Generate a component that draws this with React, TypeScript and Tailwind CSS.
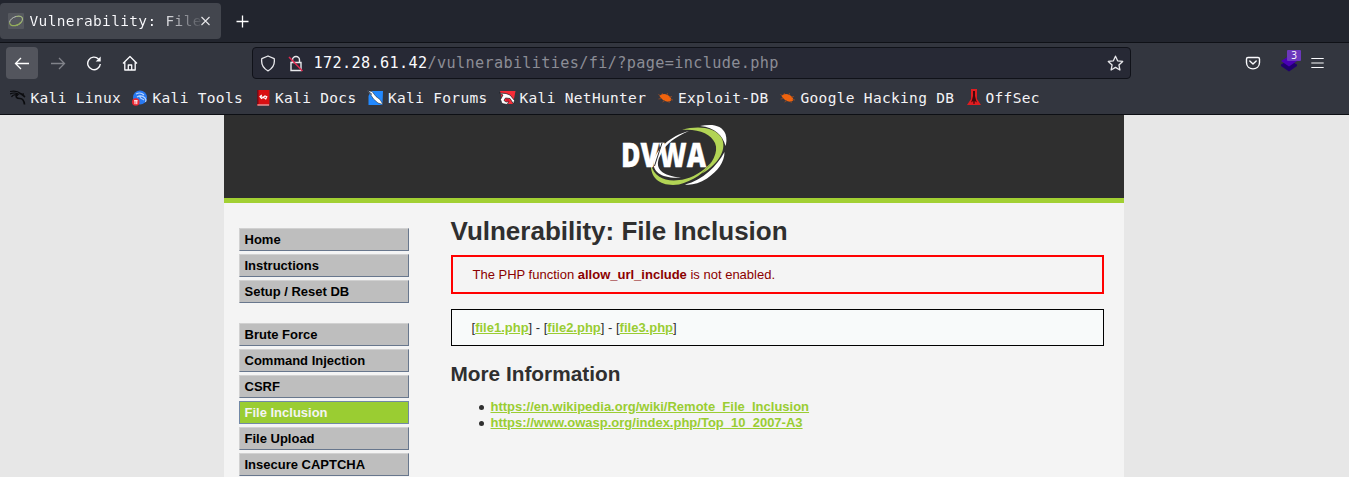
import React from "react";

const mono = "font-['DejaVu_Sans_Mono',monospace]";

function Swoosh() {
  return (
    <svg width="108" height="64" viewBox="20 13 108 64" role="img" aria-label="DVWA">
      <path fill="#fff" d="M100 16C112 13.500 122 15 125.500 24C127 29 126.500 33 125.500 36C123 26 115 17 100 16Z" />
      <path fill="#fff" d="M124.500 42C124.500 52 118 61 107 68.500C99 73.500 91 75.500 85 74.500C103 70 117 56 124.500 42Z" />
      <path fill="#b2d455" d="M82 20C97 15.500 114 17 121 27C128 38 119 54 102 63.500C112 54 119 42 115 33C111 24 98 18.500 82 20Z" />
      <path fill="#b2d455" d="M51 54C54 69 69 73 85 69C97 66 107 58 112 51C106 63 92 71 79 74.500C62 77 50 69 51 54Z" />
      <path fill="#fff" d="M89 21C75 27 66 34 62 42L59 48C55 59 62 66 81 67.500C64 69 51 63 54 50C57 39 70 26 89 21Z" />
      <text
        x="21" y="56.500" textLength="85" lengthAdjust="spacingAndGlyphs"
        fill="#fff" stroke="#fff" strokeWidth=".3"
        className="font-['Open_Sans',sans-serif] text-[33.500px] font-extrabold"
      >DVWA</text>
      <path d="M62 33L54.500 56" stroke="#2f2f2f" strokeWidth="1" />
    </svg>
  );
}

function Favicon() {
  return (
    <svg width="16" height="16" viewBox="0 0 16 16" fill="none">
      <rect width="16" height="16" rx="1" fill="#55585e" />
      <path d="M8 3.500C12 2.500 15 3.500 14.500 6.500C14 9.500 11 11.500 8.500 12.500" stroke="#a4b980" strokeWidth="1.200" />
      <path d="M1.500 9.500C2 6.500 4.500 4.500 8 3.500" stroke="#bfc4bd" strokeWidth="1" />
      <path d="M1.500 9.500C2 12.500 4.500 13 7.500 12.500C10 12 12 10.500 13 9" stroke="#94ae5a" strokeWidth="1.300" />
    </svg>
  );
}

function Dragon() {
  return (
    <svg width="17" height="16" viewBox="0 0 17 16" fill="none" stroke="#0b0c0f">
      <path d="M0 1.500C4 .8 8 1 10.500 3.500M0 4C3 2.500 7 3 9 4.500M1.500 7C3 4.500 6 4.500 8 5.500" strokeWidth="1.200" />
      <path d="M7 3.500C5 7.500 7 8.500 10 8.500C13 8.500 14 10.500 14.500 14.500M9.500 3.500C12 3.500 13 5.500 15 7M11 4.500L14 4" strokeWidth="1.700" />
    </svg>
  );
}

function Tools() {
  return (
    <svg width="17" height="16" viewBox="0 0 17 16" fill="none">
      <circle cx="8" cy="7.500" r="7" fill="#2878f0" />
      <path d="M4 4C7 2.500 10 3 12 5M5 7C8 5 11 6 13 8C14.500 9.500 13.500 12 13.500 12M8 5.500C7 9 10 8 12 10" stroke="#b9d6ff" strokeWidth="1.100" />
      <circle cx="3.800" cy="12" r="3.800" fill="#eb2630" />
      <path d="M2.100 10.700H5.600M3 10.700V14.200M4.800 10.700V14.200" stroke="#fff" />
    </svg>
  );
}

function Docs() {
  return (
    <svg width="13" height="16" viewBox="0 0 13 16" fill="none">
      <path d="M0 0H12.500V15.500H0Z" fill="#d90f12" />
      <path d="M0 0H1.500V14H0Z" fill="#710d18" />
      <path d="M.5 15H12" stroke="#efd6d6" />
      <path d="M4.800 5L3 6.500L4.500 8.500L8 6L9.800 6.800L8.500 9.500M3.500 6.500L8.500 8.500" stroke="#fff" strokeWidth="1.200" />
    </svg>
  );
}

function Forums() {
  return (
    <svg width="17" height="16" viewBox="0 0 17 16" fill="none">
      <path d="M4 1H16L15.500 15H1.500L1.500 6Z" fill="#2289ff" />
      <path d="M0 .5L5 1.500L9 6.500L13 9.500L16 14.500L11 13L6.500 9L3.500 4.500Z" fill="#fff" stroke="#15171d" strokeWidth=".5" />
      <path d="M1 1L5 4.500" stroke="#24354e" />
    </svg>
  );
}

function NetHunter() {
  return (
    <svg width="17" height="16" viewBox="0 0 17 16" fill="none">
      <path d="M1 1H16.500L14 14H4Z" fill="#f72c38" />
      <path d="M0 3L7 3.500L11 5L15.500 10.500L14.500 14L11 8.500L6.500 8L5 10.500L7 12L10 11.500L8 14.500L3 13.500L1.500 9.500L4 5Z" fill="#fff" stroke="#17191f" strokeWidth=".7" />
      <path d="M6.500 9L9.500 9L11 11.500L8 11.500Z" fill="#d21730" />
    </svg>
  );
}

function Bug() {
  return (
    <svg width="16" height="16" viewBox="0 0 16 16" fill="none">
      <path d="M1.500 6C3.500 3.500 7 3.500 9.500 5C12 6.500 14.500 9 12.500 11C9.500 13 4 10.500 1.500 6Z" fill="#f0630d" />
      <path d="M2 6L.5 4M5 4.500L4 3M9 5L9.500 3M11.500 7L14 6.500M12.500 9.500L15 10M10 11L11.500 13M7 10.500L4.500 12M3.500 8.500L.5 9" stroke="#8f4927" strokeWidth=".9" />
    </svg>
  );
}

function OffSec() {
  return (
    <svg width="14" height="17" viewBox="0 0 14 17" fill="none">
      <path d="M4 0H10V10L14 16H0L4 10Z" fill="#e11c20" />
      <path d="M6 2H8V7L9 11L10 13.500L7.800 12L7.500 15H6.500L6.200 12L4 13.500L5 11L6 7Z" fill="#40090c" />
    </svg>
  );
}

const bookmarks = [
  { label: "Kali Linux", icon: <Dragon />, box: "w-[131.500px] pl-[9.500px] gap-[4px]" },
  { label: "Kali Tools", icon: <Tools />, box: "w-[125px] gap-[4px]" },
  { label: "Kali Docs", icon: <Docs />, box: "w-[110.500px] gap-[5.500px]" },
  { label: "Kali Forums", icon: <Forums />, box: "w-[132px] gap-[4px]" },
  { label: "Kali NetHunter", icon: <NetHunter />, box: "w-[159px] gap-[3.500px]" },
  { label: "Exploit-DB", icon: <Bug />, box: "w-[122px] gap-[4px]" },
  { label: "Google Hacking DB", icon: <Bug />, box: "w-[187px] gap-[4.500px]" },
  { label: "OffSec", icon: <OffSec />, box: "gap-[4.500px]" },
];

const groups = [
  ["Home", "Instructions", "Setup / Reset DB"],
  ["Brute Force", "Command Injection", "CSRF", "File Inclusion", "File Upload", "Insecure CAPTCHA"],
];

const resources = [
  "https://en.wikipedia.org/wiki/Remote_File_Inclusion",
  "https://www.owasp.org/index.php/Top_10_2007-A3",
];

const linkClass = "font-bold text-[#9acd32] underline";

function Browser() {
  return (
    <div className={`${mono} text-[#fbfbfe]`}>
      <div className="flex h-[43px] items-start border-b border-[#0f1117] bg-[#22252e] pt-[3px]">
        <div className="flex h-9 w-[221px] items-center rounded-[4px] bg-[#43464e] pl-2">
          <Favicon />
          <span className="ml-[5.500px] w-[171px] overflow-hidden whitespace-pre bg-[linear-gradient(90deg,#fbfbfe_76%,#50535b_100%)] bg-clip-text text-[14.500px] leading-5 tracking-[0.340px] text-transparent">Vulnerability: File</span>
          <svg width="9" height="10" viewBox="0 0 9 10" stroke="#e8e8eb" strokeWidth="1.100"><path d="M.5 1L8.500 9M8.500 1L.5 9" /></svg>
        </div>
        <svg className="mt-[12px] ml-[15px]" width="13" height="13" viewBox="0 0 13 13" stroke="#fff" strokeWidth="1.300"><path d="M6.500 .5V12.500M.5 6.500H12.500" /></svg>
      </div>
      <div className="flex h-10 items-center bg-[#33363f] pl-[6px]">
        <div className="flex size-8 items-center justify-center rounded-[4px] bg-[#53555d]">
          <svg width="16" height="16" viewBox="0 0 16 16" fill="none" stroke="#fff" strokeWidth="1.300"><path d="M15 8.500H1.500M7 3L1.500 8.500L7 14" /></svg>
        </div>
        <svg className="ml-[12px]" width="16" height="16" viewBox="0 0 16 16" fill="none" stroke="#81838a" strokeWidth="1.300"><path d="M1 8.500H14.500M9 3L14.500 8.500L9 14" /></svg>
        <svg className="ml-5" width="16" height="16" viewBox="0 0 16 16" fill="none" stroke="#fbfbfe" strokeWidth="1.400"><path d="M12.500 4A6.300 6.300 0 1 0 14.300 9" /><path d="M14.700 1.500V6.500H9.700Z" fill="#fbfbfe" stroke="none" /></svg>
        <svg className="ml-[19.500px]" width="16" height="16" viewBox="0 0 16 16" fill="none" stroke="#fbfbfe" strokeWidth="1.300" strokeLinejoin="round"><path d="M1 8.500L8 1.500L15 8.500M2.800 7V15H13.200V7M6.300 15V10H9.700V15" /></svg>
        <div className="ml-[114.500px] flex h-8 w-[879px] items-center rounded-[4px] border border-[#101219] bg-[#272935] pl-[7px]">
          <svg width="16" height="17" viewBox="0 0 16 17" fill="none" stroke="#e9e9ed" strokeWidth="1.300" strokeLinejoin="round"><path d="M8 1L14.200 3.700C15 9 12.500 13.500 8 15.800C3.500 13.500 1 9 1.800 3.700Z" /></svg>
          <svg className="ml-[12px]" width="16" height="17" viewBox="0 0 16 17" fill="none"><path d="M4.500 7.500V5A3.500 3.500 0 0 1 11.500 5V7.500M3 7.500H13V15.500H3Z" stroke="#e9e9ed" strokeWidth="1.400" /><path d="M1 2L14.500 16" stroke="#e22850" strokeWidth="1.500" /></svg>
          <span className="ml-[9.500px] grow whitespace-pre text-[15.200px] leading-5 tracking-[0.350px] text-[#8c8d96]"><span className="text-[#fbfbfe]">172.28.61.42</span>/vulnerabilities/fi/?page=include.php</span>
          <svg className="mr-[6.500px]" width="17" height="17" viewBox="0 0 17 17" fill="none" stroke="#e9e9ed" strokeWidth="1.300" strokeLinejoin="round"><path d="M8.500 1.200L10.600 5.800L15.700 6.400L11.900 9.900L12.900 15L8.500 12.400L4.100 15L5.100 9.900L1.300 6.400L6.400 5.800Z" /></svg>
        </div>
        <svg className="ml-[114px]" width="16" height="16" viewBox="0 0 16 16" fill="none" stroke="#fbfbfe" strokeWidth="1.400" strokeLinecap="round" strokeLinejoin="round"><path d="M3 2.500H13C14 2.500 14.500 3 14.500 4V7.500C14.500 16 1.500 16 1.500 7.500V4C1.500 3 2 2.500 3 2.500ZM4.800 6L8 9L11.200 6" /></svg>
        <div className="relative ml-5 h-8 w-5">
          <svg className="mt-[8px]" width="17" height="18" viewBox="0 0 17 18"><path d="M0 9.500L8 5L16 9.500V11L8 16.500L0 11Z" fill="#20006d" /><path d="M0 6L8 1L16 6L8 11.500Z" fill="#4a00b5" /></svg>
          <span className="absolute top-[3px] left-[6px] flex h-[11px] w-[14px] items-center justify-center rounded-[1px] bg-[#6c38bc] pb-[2px] font-['Open_Sans',sans-serif] text-[10px] leading-none text-white">3</span>
        </div>
        <svg className="ml-[10px]" width="13" height="12" viewBox="0 0 13 12" stroke="#fbfbfe" strokeWidth="1.200"><path d="M.3 1.500H12.700M.3 6H12.700M.3 10.500H12.700" /></svg>
      </div>
      <div className="flex h-8 items-center border-b border-[#0d0f14] bg-[#33363f] pb-[2px]">
        {bookmarks.map((b) => (
          <div key={b.label} className={`flex shrink-0 items-center whitespace-nowrap text-[14.500px] leading-5 tracking-[0.320px] text-[#f3f3f6] ${b.box}`}>
            {b.icon}
            <span>{b.label}</span>
          </div>
        ))}
      </div>
    </div>
  );
}

export default function App() {
  return (
    <div className="flex h-[477px] w-[1349px] flex-col overflow-hidden bg-[#e7e7e7]">
      <Browser />
      <div className="ml-[224px] flex w-[900px] grow flex-col bg-[#f4f4f4] font-['Liberation_Sans',sans-serif] text-[13px] leading-4 text-[#2f2f2f]">
        <header className="flex h-[88px] shrink-0 justify-center border-b-[5px] border-[#a2d033] bg-[#2f2f2f] pt-[8px]">
          <Swoosh />
        </header>
        <div className="flex">
          <nav className="ml-[15px] w-[170px] shrink-0 pt-[25px]">
            {groups.map((g, i) => (
              <ul key={i} className="mb-5 flex flex-col gap-[3px]">
                {g.map((t) => (
                  <li key={t} className={t === "File Inclusion"
                    ? "h-[23px] border border-[#7288a5] bg-[#9acd32] pl-[4.500px] leading-[21px] font-bold text-[#f4f4f4]"
                    : "h-[23px] border border-t-[#d1d1d1] border-r-[#68778d] border-b-[#68778d] border-l-[#d1d1d1] bg-[#bebebe] pl-[4.500px] leading-[21px] font-bold text-black"}>{t}</li>
                ))}
              </ul>
            ))}
          </nav>
          <main className="ml-[42px] w-[653px] pt-[13px]">
            <h1 className="-ml-[0.500px] h-[39px] text-[26px] leading-[30px] font-bold">Vulnerability: File Inclusion</h1>
            <div className="h-[39px] border-2 border-[#f00] pl-[19.500px] leading-[35px] text-[#8b0000]">The PHP function <b>allow_url_include</b> is not enabled.</div>
            <div className="mt-[15px] h-[37px] border border-black bg-[#f8fafa] pl-[19.500px] leading-[35px]">
              [<a className={linkClass}>file1.php</a>] - [<a className={linkClass}>file2.php</a>] - [<a className={linkClass}>file3.php</a>]
            </div>
            <h2 className="mt-[16px] -ml-[0.500px] text-[20.800px] leading-6 font-bold">More Information</h2>
            <ul className="mt-[13px] ml-[28px]">
              {resources.map((r) => (
                <li key={r} className="flex items-center">
                  <span className="mt-[1px] mr-[6.500px] size-[5px] rounded-full bg-[#2f2f2f]" />
                  <a className={linkClass}>{r}</a>
                </li>
              ))}
            </ul>
          </main>
        </div>
      </div>
    </div>
  );
}
